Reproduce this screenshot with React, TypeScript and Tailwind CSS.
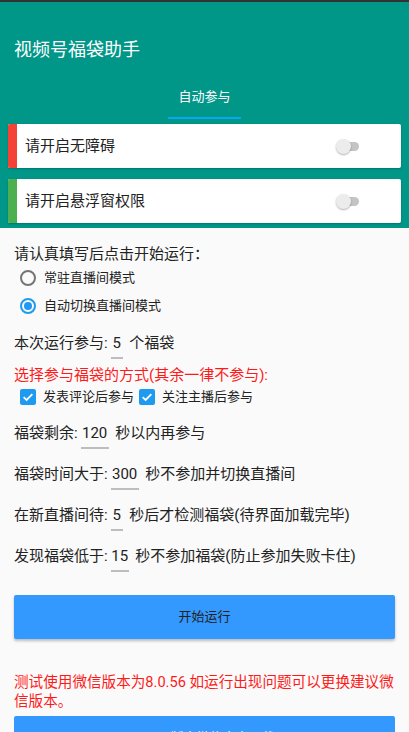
import React from 'react'

const font = { fontFamily: 'Roboto, "Noto Sans CJK SC", "Noto Sans", sans-serif' }

function Toggle() {
  return (
    <div className="relative h-[16px] w-[24px]">
      <div className="absolute left-[6px] top-[4px] h-[9px] w-[17px] rounded-full bg-[#c4c4c4]" />
      <div className="absolute left-0 top-[1px] h-[15px] w-[15px] rounded-full bg-[#ececec] shadow-[0_1px_2px_rgba(0,0,0,0.3)]" />
    </div>
  )
}

function PermCard({ label, color }: { label: string; color: string }) {
  return (
    <div className="mx-2 flex h-[44px] items-center overflow-hidden rounded-[2px] bg-white shadow-[0_1px_2px_rgba(0,0,0,0.2)]">
      <div className={`h-full w-[9px] ${color}`} />
      <span className="ml-[8px] flex-1 text-[15px] text-[#222]">{label}</span>
      <div className="mr-[41px]">
        <Toggle />
      </div>
    </div>
  )
}

function Num({ value, w }: { value: string; w: string }) {
  return (
    <span className={`relative mx-[3px] inline-block text-center ${w}`}>
      {value}
      <span className="absolute -bottom-[6px] left-0 right-0 h-[2px] bg-[#bdbdbd]" />
    </span>
  )
}

function Check({ label }: { label: string }) {
  return (
    <div className="flex items-center">
      <span className="flex h-[16px] w-[16px] items-center justify-center rounded-[2px] bg-[#1e9bf0]">
        <svg viewBox="0 0 16 16" className="h-[14px] w-[14px]">
          <path d="M3 8.2 L6.4 11.4 L13 4.6" fill="none" stroke="white" strokeWidth="2" />
        </svg>
      </span>
      <span className="ml-[7px] text-[13px] text-[#222]">{label}</span>
    </div>
  )
}

function Radio({ label, on }: { label: string; on?: boolean }) {
  return (
    <div className="flex h-[28px] items-center pl-[20px]">
      <span
        className={`flex h-[16px] w-[16px] items-center justify-center rounded-full border-2 ${
          on ? 'border-[#1e9bf0]' : 'border-[#757575]'
        }`}
      >
        {on && <span className="h-[8px] w-[8px] rounded-full bg-[#1e9bf0]" />}
      </span>
      <span className="ml-[8px] text-[13px] text-[#222]">{label}</span>
    </div>
  )
}

export default function App() {
  return (
    <div className="h-[732px] w-[409px] overflow-hidden bg-[#fafafa]" style={font}>
      <div className="bg-[#009688] pb-[5px]">
        <div className="h-[2px] bg-[#333]" />
        <div className="pl-[14px] pt-[36px] text-[18px] leading-[24px] text-white">视频号福袋助手</div>
        <div className="mt-[25px] flex justify-center">
          <div className="flex w-[73px] flex-col items-center">
            <span className="text-[13px] leading-[20px] text-white">自动参与</span>
            <div className="mt-[10px] h-[2px] w-full bg-[#03a9f4]" />
          </div>
        </div>
        <div className="mt-[5px] flex flex-col gap-[11px]">
          <PermCard label="请开启无障碍" color="bg-[#f44336]" />
          <PermCard label="请开启悬浮窗权限" color="bg-[#4caf50]" />
        </div>
      </div>

      <div className="px-[14px] pt-[16px] text-[#222]">
        <div className="text-[15px] leading-[20px]">请认真填写后点击开始运行：</div>
        <div className="-ml-[14px]">
          <Radio label="常驻直播间模式" />
          <Radio label="自动切换直播间模式" on />
        </div>

        <div className="mt-[13px] text-[15px] leading-[20px]">
          本次运行参与:
          <Num value="5" w="w-[12px]" /> 个福袋
        </div>

        <div className="mt-[12px] text-[15px] leading-[20px] text-[#ff1a1a]">选择参与福袋的方式(其余一律不参与):</div>

        <div className="ml-[6px] flex h-[24px] items-center gap-[5px]">
          <Check label="发表评论后参与" />
          <Check label="关注主播后参与" />
        </div>

        <div className="mt-[14px] text-[15px] leading-[20px]">
          福袋剩余:
          <Num value="120" w="w-[28px]" /> 秒以内再参与
        </div>
        <div className="mt-[21px] text-[15px] leading-[20px]">
          福袋时间大于:
          <Num value="300" w="w-[28px]" /> 秒不参加并切换直播间
        </div>
        <div className="mt-[21px] text-[15px] leading-[20px]">
          在新直播间待:
          <Num value="5" w="w-[12px]" /> 秒后才检测福袋(待界面加载完毕)
        </div>
        <div className="mt-[21px] text-[15px] leading-[20px]">
          发现福袋低于:
          <Num value="15" w="w-[18px]" /> 秒不参加福袋(防止参加失败卡住)
        </div>

        <button className="mt-[29px] flex h-[44px] w-full items-center justify-center rounded-[2px] bg-[#3399ff] text-[13px] text-[#222] shadow-[0_2px_3px_rgba(0,0,0,0.25)]">
          开始运行
        </button>

        <div className="mt-[34px] text-[14.6px] leading-[19px] text-[#ff1a1a]">
          测试使用微信版本为8.0.56 如运行出现问题可以更换建议微信版本。
        </div>

        <button className="mt-[5px] flex h-[44px] w-full items-center justify-center rounded-[2px] bg-[#3399ff] text-[13px] text-white">
          8.0.56版本微信官方下载
        </button>
      </div>
    </div>
  )
}
